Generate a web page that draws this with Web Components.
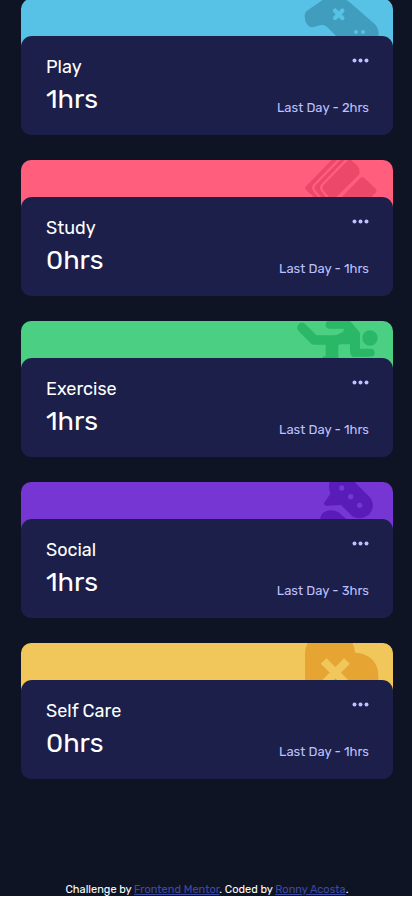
<!DOCTYPE html>
<html lang="en">
<head>
<meta charset="utf-8">
<meta name="viewport" content="width=device-width, initial-scale=1">
<title>Time tracking dashboard</title>
<style>
html{background:#fff}
body{margin:0;font-family:Rubik,Roboto,sans-serif;color:#fff}
</style>
</head>
<body>
<time-dashboard></time-dashboard>
<script>
const ICONS={
play:{top:-3,art:`<path fill="#409dbd" d="M44 50Q43 37 55 29L97 1Q112-10 135-8Q158-9 178 6L254 72Q266 83 266 106L266 120H150L136 106L114 83Q107 75 96 74L68 82Q46 80 44 50Z"/><path stroke="#57c2e6" stroke-width="13" stroke-linecap="round" d="M135 32L157 54M157 32L135 54"/><g fill="#57c2e6"><circle cx="198" cy="96" r="6"/><circle cx="219" cy="96" r="6"/></g>`},
study:{top:15,art:`<path fill="#ec4869" d="M128 12H180L203 33Q210 43 208 58L140 128H74L47 104Q44 100 47 95Z"/><path fill="none" stroke="#ff5e7d" stroke-width="7" d="M150 11L73 90Q67 98 73 107L90 128M173 11L97 89Q90 98 97 107L114 128"/><path stroke="#ff5e7d" stroke-width="7" d="M216 56L138 132"/><path fill="#ec4869" d="M210 70Q217 63 224 70L257 101Q262 107 257 113L240 130H152Z"/>`},
exercise:{top:18,art:`<g fill="none" stroke="#2bb866" stroke-linecap="round" stroke-linejoin="round"><path stroke-width="29" d="M36 38L73 75H145"/><path stroke-width="24" d="M119 29H166L196 62V113H242"/></g><path fill="#2bb866" d="M165 17H180L210 53V124L190 126Q180 123 180 108V88H145V135H92Q98 123 107 123V75L160 50Z"/><circle cx="240" cy="69" r="23" fill="#2bb866"/>`},
social:{top:15,art:`<path fill="#5a1cb9" d="M119 14Q114 32 121 50L102 78Q101 86 110 86L153 84L187 118Q213 132 238 112Q257 88 242 64L193 14Z"/><path fill="#5a1cb9" d="M90 131Q90 116 101 106Q124 94 146 106L174 131Z"/><g fill="#7536d3"><circle cx="155" cy="33" r="8"/><circle cx="182" cy="59" r="8"/><circle cx="209" cy="85" r="8"/></g>`},
care:{top:18,art:`<path fill="#e6a532" d="M54 17H187Q194 30 195 47Q228 47 249 70Q266 91 265 119V138H45V48Q45 31 54 17Z"/><path stroke="#f1c75b" stroke-width="24" d="M101 72L170 141M171 72L102 141"/>`}
};
class TimeDashboard extends HTMLElement{
 connectedCallback(){
  this.attachShadow({mode:"open"}).innerHTML=`
  <style>
  :host{display:block;background:#0f1424;margin-bottom:1px;overflow:hidden}
  main{display:grid;gap:25px;padding:0 19px 0 21px;margin-top:-1px}
  </style>
  <main>
  <activity-card icon="play" style="--accent:#57c2e6"><span slot="name">Play</span><span slot="hours">1hrs</span><span slot="last">Last Day - 2hrs</span></activity-card>
  <activity-card icon="study" style="--accent:#ff5e7d"><span slot="name">Study</span><span slot="hours">0hrs</span><span slot="last">Last Day - 1hrs</span></activity-card>
  <activity-card icon="exercise" style="--accent:#4bcf82"><span slot="name">Exercise</span><span slot="hours">1hrs</span><span slot="last">Last Day - 1hrs</span></activity-card>
  <activity-card icon="social" style="--accent:#7536d3"><span slot="name">Social</span><span slot="hours">1hrs</span><span slot="last">Last Day - 3hrs</span></activity-card>
  <activity-card icon="care" style="--accent:#f1c75b"><span slot="name">Self Care</span><span slot="hours">0hrs</span><span slot="last">Last Day - 1hrs</span></activity-card>
  </main>
  <page-credit></page-credit>`;
 }
}
class ActivityCard extends HTMLElement{
 connectedCallback(){
  const icon=ICONS[this.getAttribute("icon")];
  this.attachShadow({mode:"open"}).innerHTML=`
  <style>
  :host{display:grid;grid-template-rows:37px auto;border-radius:10px;overflow:hidden;background:linear-gradient(var(--accent) 60px,#1c1f4a 60px)}
  .band{display:flex;justify-content:flex-end;padding-right:8px}
  svg{display:block;flex:none;width:90px;height:40px}
  section{position:relative;background:#1c1f4a;border-radius:11px;padding:16px 24px 18px 25px}
  .row{display:flex;justify-content:space-between}
  h2{margin:0;font-size:18px;line-height:30px;font-weight:400}
  .row+.row{align-items:center}
  .hours{margin:0;font-size:27px;line-height:35px}
  .last{margin:0;padding-top:16px;font-size:13px;line-height:18px;color:#bdc1ff}
  button{display:flex;align-items:center;height:17px;border:0;padding:0;background:none;cursor:pointer}
  button svg{width:17px;height:5px;fill:#bdc1ff}
  </style>
  <div class="band"><svg viewBox="15 ${icon.top} 270 120" fill="none" aria-hidden="true">${icon.art}</svg></div>
  <section>
   <div class="row"><h2><slot name="name"></slot></h2><button type="button" aria-label="More options"><svg viewBox="0 0 17 5"><circle cx="2.5" cy="2.5" r="2"/><circle cx="8.5" cy="2.5" r="2"/><circle cx="14.5" cy="2.5" r="2"/></svg></button></div>
   <div class="row"><p class="hours"><slot name="hours"></slot></p><p class="last"><slot name="last"></slot></p></div>
  </section>`;
 }
}
class PageCredit extends HTMLElement{
 connectedCallback(){
  this.attachShadow({mode:"open"}).innerHTML=`
  <style>
  :host{display:block;padding-top:104px;font-size:11px;line-height:13px;text-align:center}
  p{margin:0 0 0 2px}
  a{color:#3e4ba6}
  </style>
  <p>Challenge by <a href="#mentor">Frontend Mentor</a>. Coded by <a href="#author">Ronny Acosta</a>.</p>`;
 }
}
customElements.define("page-credit",PageCredit);
customElements.define("activity-card",ActivityCard);
customElements.define("time-dashboard",TimeDashboard);
</script>
</body>
</html>
